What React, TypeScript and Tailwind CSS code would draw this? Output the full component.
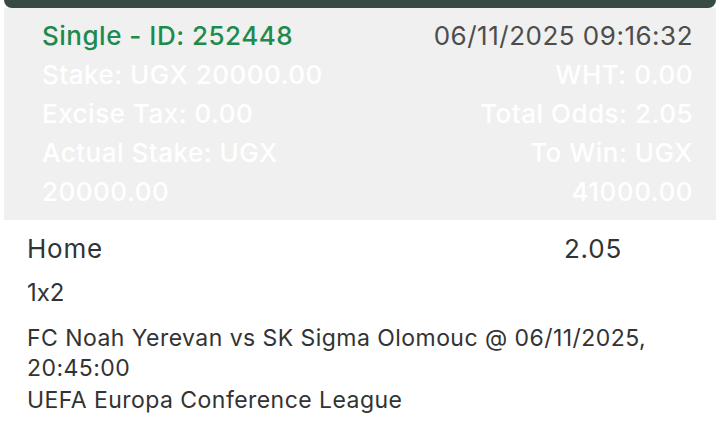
export default function App() {
  const font = { fontFamily: "Inter, 'Noto Sans', sans-serif" };
  return (
    <div
      className="w-[720px] h-[441px] bg-white overflow-hidden [font-feature-settings:'calt'_0]"
      style={font}
    >
      <div className="mx-[4px] h-[8px] rounded-b-[8px] bg-[#374a44]" />
      <div className="mx-[4px] bg-[#f0f0f0] pl-[38px] pr-[23px] pt-[8px] pb-[9px] text-[26px] leading-[39px] tracking-[0.5px]">
        <div className="flex justify-between">
          <span className="text-[#1e8a4c] font-medium">Single - ID: 252448</span>
          <span className="text-[#4d4d4d]">06/11/2025 09:16:32</span>
        </div>
        <div className="flex justify-between text-white font-medium">
          <div className="w-[300px]">Stake: UGX 20000.00</div>
          <div className="w-[300px] text-right">WHT: 0.00</div>
        </div>
        <div className="flex justify-between text-white font-medium">
          <div className="w-[300px]">Excise Tax: 0.00</div>
          <div className="w-[300px] text-right">Total Odds: 2.05</div>
        </div>
        <div className="flex justify-between text-white font-medium">
          <div className="w-[260px]">Actual Stake: UGX 20000.00</div>
          <div className="w-[200px] text-right">To Win: UGX 41000.00</div>
        </div>
      </div>
      <div className="px-[27px] pt-[12px] text-[#333]">
        <div className="flex text-[26px] leading-[34px] tracking-[0.8px]">
          <span className="flex-1">Home</span>
          <span className="mr-[71px]">2.05</span>
        </div>
        <div className="text-[24px] leading-[32px] mt-[11px]">1x2</div>
        <div className="text-[23px] leading-[30px] tracking-[0.45px] mt-[14px] w-[660px]">
          FC Noah Yerevan vs SK Sigma Olomouc @ 06/11/2025, 20:45:00
        </div>
        <div className="text-[23px] leading-[30px] tracking-[0.45px] mt-[2px]">
          UEFA Europa Conference League
        </div>
      </div>
    </div>
  );
}
